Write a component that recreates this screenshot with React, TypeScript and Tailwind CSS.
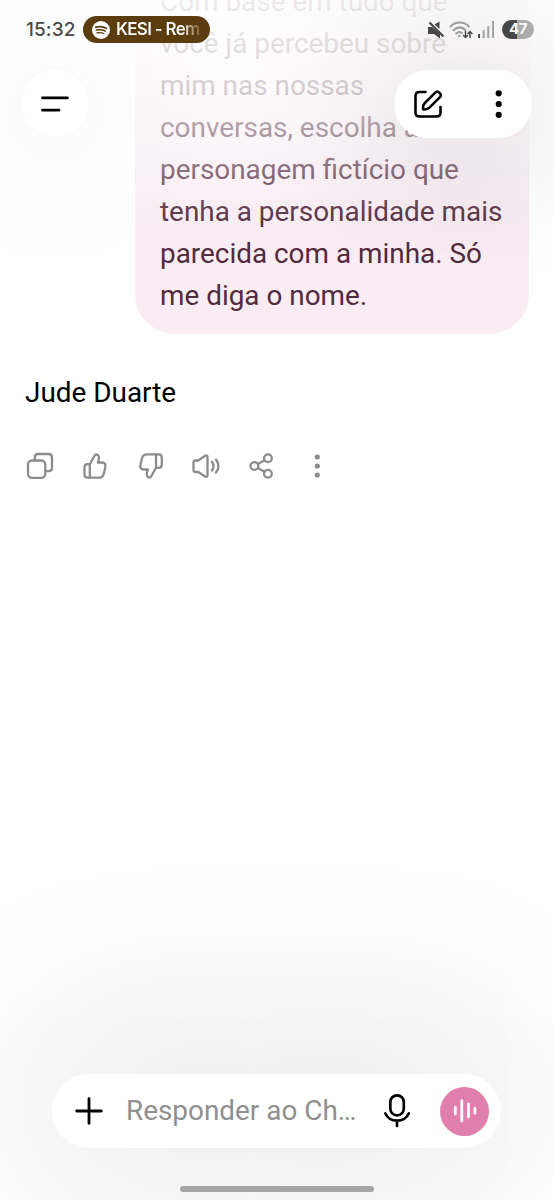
import type { ReactNode } from 'react';

type IconProps = {
    className?: string;
    children: ReactNode;
    viewBox: string;
};

function Icon({ className, children, viewBox }: IconProps) {
    return (
        <svg
            viewBox={viewBox}
            className={className}
            fill="none"
            stroke="currentColor"
            strokeWidth="2.3"
            strokeLinecap="round"
            strokeLinejoin="round"
            aria-hidden="true"
        >
            {children}
        </svg>
    );
}

function StatusBar() {
    return (
        <div className="flex h-[59px] items-center pl-[26px] pr-[20px]">
            <span className="w-[50px] whitespace-nowrap pt-[2px] font-['Inter',sans-serif] text-[19px] font-medium tracking-[0.1px] text-[#4a4a4a]">15:32</span>
            <div className="ml-[7px] flex h-[27px] w-[127px] items-center rounded-full bg-[#5c3d10] pl-[9px]">
                <svg viewBox="0 0 18 18" className="size-[18px] shrink-0" fill="none" strokeLinecap="round" stroke="#5c3d10" aria-hidden="true">
                    <circle cx="9" cy="9" r="9" fill="#fff" stroke="none" />
                    <path d="M3.8 6.2c3.6-1.1 7.4-.7 10.6 1" strokeWidth="1.8" />
                    <path d="M4.3 9.1c3.1-.8 6.2-.5 9 .9" strokeWidth="1.5" />
                    <path d="M4.8 11.9c2.6-.6 5-.4 7.2.8" strokeWidth="1.2" />
                </svg>
                <span className="ml-[6px] w-[84px] whitespace-nowrap bg-linear-to-r from-white from-78% to-[#7a5c30] bg-clip-text pt-px font-['Inter',sans-serif] text-[17px] font-semibold tracking-[-0.7px] text-transparent">
                    KESI - Rem
                </span>
            </div>

            <div className="ml-auto flex items-center">
                <svg viewBox="0 0 18 18" className="h-[18px] w-[18px]" aria-hidden="true">
                    <path d="M1 6h4l8 7v4.5L7 13H1zM7.5 3.5 12.5.5V8z" fill="#4a4a4a" />
                    <path d="M2.5 1.5 16.5 15.5" stroke="#4a4a4a" strokeWidth="2.2" />
                </svg>
                <svg viewBox="0 0 24 18" className="ml-[4px] h-[18px] w-[24px]" fill="none" stroke="#a3a3a3" strokeWidth="2.1" strokeLinecap="round" aria-hidden="true">
                    <path d="M1.5 5.5C6.5.2 15 .2 20 5.5M4.5 9.2c4-3.8 8.5-3.8 12 0M7.3 12.5c1.8-1.7 4.2-1.7 5.7-.5" />
                    <circle cx="10.3" cy="15" r="1.3" fill="#a3a3a3" stroke="none" />
                    <path d="M16.5 10.5v6m-2-2 2 2 2-2M21 16.5v-6m-2 2 2-2 2 2" stroke="#4a4a4a" strokeWidth="1.5" />
                </svg>
                <svg viewBox="0 0 16 17" className="ml-[5px] h-[17px] w-[16px]" strokeWidth="2" stroke="#a9a9a9" aria-hidden="true">
                    <path d="M1 13v4" stroke="#4a4a4a" />
                    <path d="M5.7 9v8M10.3 5v12M15 0v17" />
                </svg>
                <div className="ml-[8px] flex h-[19px] w-[32px] items-center justify-center rounded-full bg-linear-to-r from-[#4a4a4a] from-47% to-[#b0b0b0] to-47% font-['Inter',sans-serif] text-[15px] font-bold tracking-[-0.5px] text-white">
                    47
                </div>
            </div>
        </div>
    );
}

function Header() {
    return (
        <header className="absolute inset-x-0 top-0">
            <StatusBar />
            <div className="mt-[11px] flex items-start justify-between px-[22px]">
                <button className="relative z-10 flex size-[67px] items-center justify-center rounded-full bg-white shadow-[0_10px_150px_20px_rgba(0,0,0,0.08)]" aria-label="Menu">
                    <Icon viewBox="0 0 28 16" className="-ml-[1px] h-[16px] w-[28px] text-black">
                        <path d="M1.5 1.8h25M1.5 14.2H18" strokeWidth="2.8" />
                    </Icon>
                </button>
                <div className="flex h-[68px] w-[138px] items-center rounded-full bg-white pl-[20px] text-black shadow-[0_6px_150px_20px_rgba(0,0,0,0.15)]">
                    <Icon viewBox="0 0 28 28" className="size-[28px]">
                        <path d="M11.5 2h-6q-4 0-4 4v16.5q0 4 4 4h17q4 0 4-4V17" strokeWidth="2.6" />
                        <path d="M21 2.8 10.8 13c-1.3 1.3-2 3.5-1.7 6.4 2.9.3 5-.4 6.3-1.7L25.7 7.4c2.9-3-1.7-7.6-4.7-4.6z" strokeWidth="2.5" />
                    </Icon>
                    <Icon viewBox="0 0 8 28" className="ml-[53px] h-[28px] w-[8px]">
                        <g fill="currentColor" stroke="none">
                            <circle cx="3.7" cy="3.3" r="3.1" />
                            <circle cx="3.7" cy="14" r="3.1" />
                            <circle cx="3.7" cy="24.8" r="3.1" />
                        </g>
                    </Icon>
                </div>
            </div>
        </header>
    );
}

function MessageActions() {
    return (
        <div className="mt-[38px] flex gap-[27.4px] pl-[26px] text-[#8c8c8c]">
            <Icon viewBox="0 0 28 28" className="size-[28px]">
                <rect x="2" y="8.5" width="17.3" height="17.3" rx="4" />
                <path d="M8.8 8.5v-3Q8.8 2 12.300 2h10.200Q26 2 26 5.500v10.200q0 3.500-3.500 3.500h-3" />
            </Icon>
            <Icon viewBox="0 0 28 28" className="size-[28px]">
                <path d="M8.8 12.300 13.700 3.500c.9-1.700 3.500-1 4.100.9.500 1.500.1 4-1 6.100h3.900c3.500 0 4.300 2 3.500 5.200l-1.400 6c-.7 2.800-2 4-4.900 4H6.500c-2 0-3-1.200-3-3.200v-7c0-2.200 1-3.300 3-3.300h2.300" />
                <path d="M8.8 12.300v13.400" />
            </Icon>
            <Icon viewBox="0 0 28 28" className="size-[28px]">
                <path d="M19 15.700 14.100 24.500c-.9 1.700-3.500 1-4.100-.9-.5-1.500-.1-4 1-6.100H7.100c-3.500 0-4.300-2-3.500-5.200l1.400-6c.7-2.800 2-4 4.900-4h11.900c2 0 3 1.200 3 3.200v7c0 2.200-1 3.300-3 3.300H19V2.300" />
            </Icon>
            <Icon viewBox="0 0 30 28" className="-ml-[1px] h-[28px] w-[30px]">
                <path d="M2.500 10.500q0-2 2-2h2.800l6.800-4.700c1.300-.8 2.400-.2 2.400 1.300v18.100c0 1.500-1.100 2.100-2.400 1.300L7.300 20H4.500q-2 0-2-2z" />
                <path d="M21 9.700q3 4.400 0 8.800M25 7.500q5 6.500 0 13" />
            </Icon>
            <Icon viewBox="0 0 28 28" className="-ml-[1px] size-[28px]">
                <circle cx="6.400" cy="14" r="3.900" />
                <circle cx="19.900" cy="6.300" r="3.900" />
                <circle cx="19.900" cy="21.700" r="3.900" />
                <path d="m9.900 12 6.600-3.700M9.900 16l6.600 3.700" />
            </Icon>
            <Icon viewBox="0 0 28 28" className="size-[28px]">
                <g fill="currentColor" stroke="none">
                    <circle cx="14.300" cy="5" r="2.600" />
                    <circle cx="14.300" cy="14" r="2.600" />
                    <circle cx="14.300" cy="23" r="2.600" />
                </g>
            </Icon>
        </div>
    );
}

function Composer() {
    return (
        <footer className="absolute inset-x-0 bottom-0">
            <div className="ml-[52px] flex h-[74px] w-[449px] items-center rounded-full bg-white pl-[23px] shadow-[0_-10px_190px_25px_rgba(0,0,0,0.125)]">
                <Icon viewBox="0 0 28 28" className="size-[28px] text-black">
                    <path d="M14 1.700v24.600M1.700 14h24.600" strokeWidth="2.800" />
                </Icon>
                <span className="ml-[23px] w-[232px] whitespace-nowrap text-[27.9px] text-[#8f8f8f]">Responder ao Ch…</span>
                <Icon viewBox="0 0 28 36" className="ml-[25px] h-[36px] w-[28px] text-black">
                    <rect x="7.300" y="2.300" width="13.500" height="20" rx="6.700" strokeWidth="2.700" />
                    <path d="M2.300 20.500c4.600 9.600 18.900 9.600 23.500 0M14 28v5" strokeWidth="2.700" />
                </Icon>
                <button className="ml-[29px] flex size-[49px] items-center justify-center rounded-full bg-[#e07eae] text-white" aria-label="Voz">
                    <Icon viewBox="0 0 24 24" className="size-[24px]">
                        <path d="M2.300 8.300v6.600M8.800 1.700v20.200M15.400 4.800v13.200M21.900 9.200v5" strokeWidth="2.800" />
                    </Icon>
                </button>
            </div>
            <div className="mx-auto mb-[8px] mt-[38px] h-[6px] w-[194px] rounded-full bg-[#a5a5a5]" />
        </footer>
    );
}

export default function App() {
    return (
        <main className="relative h-[1200px] w-[554px] overflow-hidden bg-white font-['Roboto',sans-serif]">
            <section className="flex flex-col">
                <div className="-mt-[38px] ml-[135px] w-[394px] rounded-[40px] bg-[#f9ecf3] px-[25px] pb-[17px] pt-[19px] text-[27.9px] leading-[42px] text-[#522b3d]">
                    Com base em tudo que
                    <br />
                    você já percebeu sobre
                    <br />
                    mim nas nossas
                    <br />
                    conversas, escolha a
                    <br />
                    personagem fictício que
                    <br />
                    tenha a personalidade mais
                    <br />
                    parecida com a minha. Só
                    <br />
                    me diga o nome.
                </div>
                <p className="mt-[38px] pl-[25px] text-[27.9px] leading-[42px] text-black">Jude Duarte</p>
                <MessageActions />
            </section>

            {/* scroll fade behind the floating buttons */}
            <div className="pointer-events-none absolute inset-x-0 top-0 h-[240px] bg-[linear-gradient(to_bottom,rgb(255_255_255/0.9)_0,rgb(255_255_255/0.84)_50px,rgb(255_255_255/0.76)_90px,rgb(255_255_255/0.54)_130px,rgb(255_255_255/0.33)_170px,rgb(255_255_255/0.07)_215px,transparent_240px)]" />
            <Header />
            <Composer />
        </main>
    );
}
